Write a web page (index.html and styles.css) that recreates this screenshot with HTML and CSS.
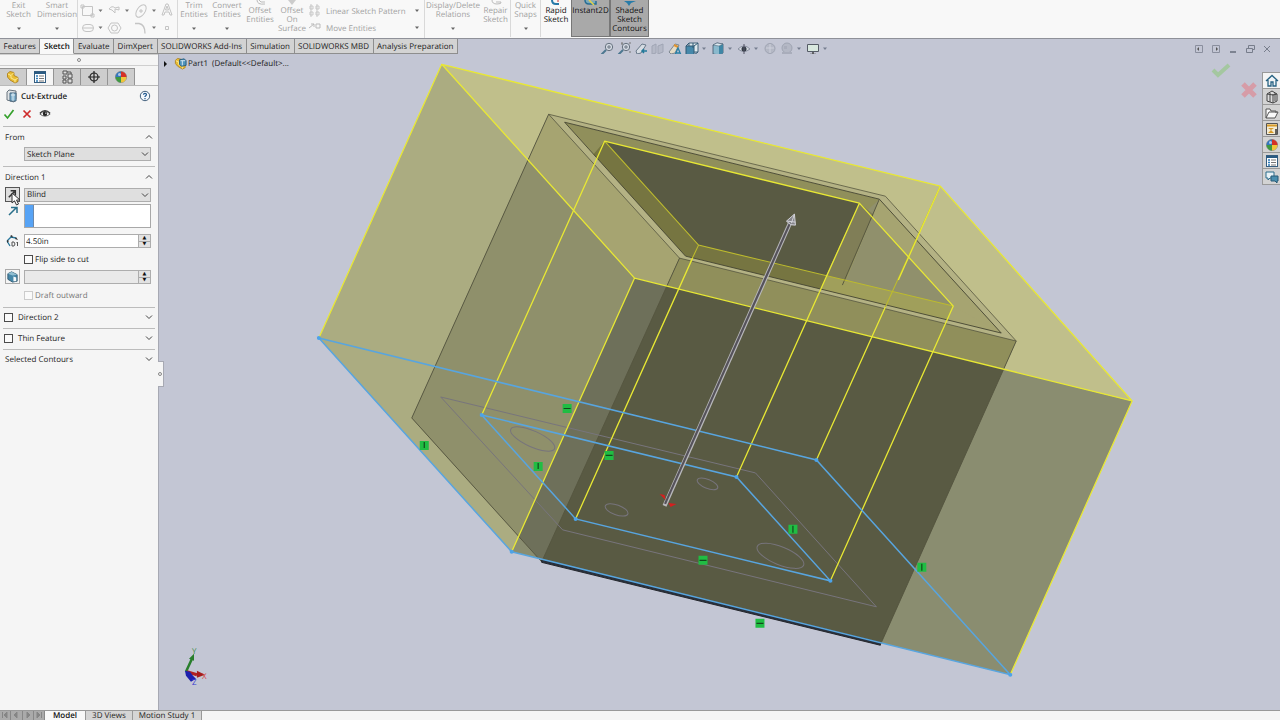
FILE: index.html
```html
<!DOCTYPE html>
<html lang="en">
<head>
<meta charset="utf-8">
<title>Part1 - Cut-Extrude</title>
<link rel="stylesheet" href="styles.css">
</head>
<body>
<svg class="defs" aria-hidden="true">
  <symbol id="caret" viewBox="0 0 6 4"><path d="M1 0.5h4L3 3z" fill="currentColor"/></symbol>
  <symbol id="up" viewBox="0 0 8 6"><path d="M1 4.5 4 1.5 7 4.5" fill="none" stroke="#444"/></symbol>
  <symbol id="down" viewBox="0 0 8 6"><path d="M1 1.5 4 4.5 7 1.5" fill="none" stroke="#444"/></symbol>
  <symbol id="part" viewBox="0 0 14 14"><path d="M1.500 3.500 4 1.500l4 1v3l4 2v4l-3 1.500-5-3-2.500-3z" fill="#e8bd35" stroke="#a97912" stroke-width=".8"/><path d="M2 4l3 1.500 3-3M5 5.500V8l4 2v2.500M9 10l3-2" fill="none" stroke="#fff2a8" stroke-width=".8"/></symbol>
  <symbol id="list" viewBox="0 0 14 14"><rect x="1.500" y="1.500" width="11" height="11" fill="#fff" stroke="#365e80"/><path d="M1 3h12" stroke="#2b5b82" stroke-width="2"/><path d="M3 6h2M3 8.500h2M3 11h2" stroke="#2b7ab8" stroke-width="1.500"/><path d="M6 6h5M6 8.500h5M6 11h5" stroke="#777"/></symbol>
  <symbol id="ball" viewBox="0 0 14 14"><circle cx="7" cy="7" r="5.500" fill="#eee" stroke="#555" stroke-width=".6"/><path d="M7 7V1.500A5.500 5.500 0 0 0 1.500 7z" fill="#3477bd"/><path d="M7 7V1.500A5.500 5.500 0 0 1 12.500 7z" fill="#d43127"/><path d="M7 7h5.500A5.500 5.500 0 0 1 7 12.500z" fill="#f0c53a"/><path d="M7 7v5.500A5.500 5.500 0 0 1 1.500 7z" fill="#3e9841"/><circle cx="5.500" cy="4.500" r="1.500" fill="#fff" opacity=".6"/></symbol>
  <symbol id="lens" viewBox="0 0 14 14"><circle cx="9" cy="5" r="3.700" fill="#d3d9e2" stroke="#66727f"/><path d="M6 8 1.500 12.500" stroke="#4d7890" stroke-width="2"/><path d="M7 5h4M9 3v4" stroke="#66727f" stroke-width=".9"/></symbol>
  <symbol id="eye" viewBox="0 0 14 14"><path d="M1 7q6-6 12 0-6 5-12 0z" fill="#fff" stroke="#444"/><path d="M1 6q6-6 12 0" fill="none" stroke="#333" stroke-width="1.300"/><circle cx="7" cy="6.800" r="2.600" fill="#222"/><circle cx="8" cy="6" r=".7" fill="#fff"/></symbol>
  <symbol id="cube" viewBox="0 0 14 14"><path d="M2 3l4-2 6 1v9l-4 2-6-1z" fill="#8ab9cd" stroke="#40566a" stroke-width=".8"/><path d="M8 4l4-2v9l-4 2z" fill="#3f86a5"/><path d="M2 3l6 1 4-2-6-1z" fill="#dce9f0" stroke="#40566a" stroke-width=".5"/></symbol>
</svg>

<div class="app">
  <header class="ribbon">
    <button class="tool w37"><span>Exit<br>Sketch</span><svg class="caret"><use href="#caret"/></svg></button>
    <button class="tool w40"><span>Smart<br>Dimension</span><svg class="caret"><use href="#caret"/></svg></button>
    <div class="sketch-tools">
      <svg viewBox="0 0 98 38" fill="none" stroke="#c4c4c4">
        <path d="M4.500 6.500h10v9h-10zM3 5h3v3H3zM13 14h3v3h-3z"/><path d="M31 9q3-4 6-1l4-1v3l-4-1v4l-3-3z"/><ellipse cx="63" cy="11" rx="7" ry="4" transform="rotate(-55 63 11)"/><path d="M62 10h2v2h-2z"/><path d="M84 15l4-11h2l4 11h-2l-1-3h-4l-1 3zM87.500 10h3L89 6z"/>
        <rect x="4.500" y="24.500" width="11" height="7" rx="3.500"/><path d="M7 28h6M6 27v2M14 27v2"/><path d="M33 23h7l3 5-3 5h-7l-3-5z"/><circle cx="36.500" cy="28" r="3"/><path d="M57 23.500h4q6 1 6 10" stroke-width="1.300"/><path d="M87.500 26.500h3v3h-3z"/>
        <g fill="#777" stroke="none"><path d="M20.500 9.500h4l-2 2.500zM47 9.500h4L49 12zM74 9.500h4L76 12zM20.500 26.500h4l-2 2.500zM74 26.500h4L76 29z"/></g>
      </svg>
    </div>
    <button class="tool w32"><span>Trim<br>Entities</span><svg class="caret"><use href="#caret"/></svg></button>
    <button class="tool w34"><span>Convert<br>Entities</span><svg class="caret"><use href="#caret"/></svg></button>
    <button class="tool low w32"><svg class="stub" viewBox="0 0 14 6"><path d="M4 0q0 5 8 4M6 0q1 3 6 2" fill="none" stroke="#bbb"/></svg><span>Offset<br>Entities</span></button>
    <button class="tool low w32"><svg class="stub" viewBox="0 0 14 6"><path d="M3 0h8L7 5z" fill="#ccc"/></svg><span>Offset<br>On<br>Surface</span></button>
    <div class="stack">
      <button><svg viewBox="0 0 14 14"><path d="M2 2h3v3H2zM8 2h3v3H8zM2 8h3v3H2zM8 8h3v3H8zM3 0v13M9 0v13" fill="none" stroke="#c8c8c8"/></svg><span>Linear Sketch Pattern</span><svg class="caret"><use href="#caret"/></svg></button>
      <button><svg viewBox="0 0 14 14"><path d="M1 7l5-4M3 3h3v3M8 3h4v4H8z" fill="none" stroke="#bbb"/></svg><span>Move Entities</span><svg class="caret"><use href="#caret"/></svg></button>
    </div>
    <button class="tool w56"><span>Display/Delete<br>Relations</span><svg class="caret"><use href="#caret"/></svg></button>
    <button class="tool low w30 edge"><svg class="stub" viewBox="0 0 14 6"><path d="M3 0q0 4 5 4t4-2H7" fill="none" stroke="#bbb"/></svg><span>Repair<br>Sketch</span></button>
    <button class="tool w30 edge"><span>Quick<br>Snaps</span><svg class="caret"><use href="#caret"/></svg></button>
    <button class="tool low w30 on"><svg class="stub" viewBox="0 0 14 6"><path d="M3 0q0 4 4 4h3" fill="none" stroke="#2779a9" stroke-width="2"/><path d="M9 0v2" stroke="#c33"/></svg><span>Rapid<br>Sketch</span></button>
    <button class="tool low w39 on pressed"><svg class="stub" viewBox="0 0 14 6"><path d="M1 0q0 4 4 4h7V1" fill="#79a9bd" stroke="#286e94" stroke-width="1.500"/><path d="M5 0l5 5" stroke="#e3d24a" stroke-width="1.500"/></svg><span>Instant2D</span></button>
    <button class="tool low w39 on pressed"><svg class="stub" viewBox="0 0 14 6"><path d="M1 1h12L8 3 6 6 4 3z" fill="#277ba8"/></svg><span>Shaded<br>Sketch<br>Contours</span></button>
  </header>

  <div class="tabbar">
    <nav class="tabs">
      <button>Features</button><button class="active">Sketch</button><button>Evaluate</button><button>DimXpert</button><button>SOLIDWORKS Add-Ins</button><button>Simulation</button><button>SOLIDWORKS MBD</button><button>Analysis Preparation</button>
    </nav>
    <div class="hud">
      <button aria-label="Zoom to fit"><svg><use href="#lens"/></svg></button>
      <button aria-label="Zoom to area"><svg viewBox="0 0 14 14"><use href="#lens"/><path d="M4 1h2M12 1h2M13 9v2M5 1v2" stroke="#777"/></svg></button>
      <button aria-label="Previous view"><svg viewBox="0 0 14 14"><path d="M2 9 8 2l4 1-5 8-4 1z" fill="#d6dce3" stroke="#69798a"/><path d="M13 9H8m2-2-2 2 2 2" fill="none" stroke="#23799a" stroke-width="1.500"/></svg></button>
      <button aria-label="Section view"><svg viewBox="0 0 14 14"><path d="M1 4l4-2v9l-4 1zM7 4l5-2v8l-5 2z" fill="#b5b9c7" stroke="#a0a5b4"/></svg></button>
      <button aria-label="Annotation view"><svg viewBox="0 0 14 14"><path d="M1 10 7 2l4 1-4 8-4 1z" fill="#e5dcc5" stroke="#7d8790"/><path d="M6 3l4 2" stroke="#e1942f" stroke-width="2"/><path d="M7 13l3-7 3 7M8 11h4" fill="none" stroke="#277fa5" stroke-width="1.300"/></svg></button>
      <button aria-label="View orientation"><svg viewBox="0 0 14 14"><path d="M4 1h9v9H4z" fill="#dfe9ed" stroke="#43657a"/><path d="M1 4h8v9H1z" fill="#4688aa" stroke="#315a75"/><path d="M1 4l3-3M9 4l4-3M9 13l4-3M8 1v5" stroke="#315a75"/></svg></button><svg class="caret"><use href="#caret"/></svg>
      <button aria-label="Display style"><svg><use href="#cube"/></svg></button><svg class="caret"><use href="#caret"/></svg>
      <button aria-label="Hide items"><svg viewBox="0 0 14 14"><path d="M1 7q6-6 12 0-6 5-12 0z" fill="#d5d9e0" stroke="#8990a0"/><circle cx="7" cy="7" r="2.500" fill="#333b45"/><path d="M7 2v10" stroke="#556"/></svg></button><svg class="caret"><use href="#caret"/></svg>
      <button aria-label="Appearance"><svg viewBox="0 0 14 14"><circle cx="7" cy="6.500" r="5" fill="#b4b8c5" stroke="#a0a5b3"/><path d="M7 2v9M3 6h8" stroke="#ced1dc"/></svg></button>
      <button aria-label="Scene"><svg viewBox="0 0 14 14"><circle cx="7" cy="6" r="5" fill="#b4b8c5" stroke="#a0a5b3"/><path d="M2 10h10v3H2M4 4h3v3H4z" fill="#a9adbb"/></svg></button><svg class="caret"><use href="#caret"/></svg>
      <button aria-label="View settings"><svg viewBox="0 0 14 14"><path d="M1.500 2.500h11v7h-11z" fill="#d9e8df" stroke="#555b66"/><path d="M7 10v2M4 12.500h6" stroke="#444" stroke-width="1.500"/></svg></button><svg class="caret"><use href="#caret"/></svg>
    </div>
    <div class="window-buttons">
      <button aria-label="Collapse left"><svg viewBox="0 0 10 10"><path d="M1.500 1.500h7v7h-7z" fill="none" stroke="#8a8f9e"/><path d="M5 3v4L3 5z" fill="#555"/></svg></button>
      <button aria-label="Collapse right"><svg viewBox="0 0 10 10"><path d="M1.500 1.500h7v7h-7z" fill="none" stroke="#8a8f9e"/><path d="M5 3v4l2-2z" fill="#555"/></svg></button>
      <button aria-label="Minimize"><svg viewBox="0 0 10 10"><path d="M2 8h6" stroke="#666c7b" stroke-width="1.500"/></svg></button>
      <button aria-label="Restore"><svg viewBox="0 0 10 10"><path d="M1.500 4.500h6v4h-6zM3.500 4V1.500h6v4H8" fill="none" stroke="#777d8b"/></svg></button>
      <button aria-label="Close"><svg viewBox="0 0 10 10"><path d="M2 2l6 6M8 2 2 8" stroke="#777d8b"/></svg></button>
    </div>
  </div>

  <main class="work">
    <aside class="panel">
      <div class="grip"><i></i></div>
      <nav class="panel-tabs">
        <button aria-label="Feature tree"><svg><use href="#part"/></svg></button>
        <button class="active" aria-label="Properties"><svg><use href="#list"/></svg></button>
        <button aria-label="Configurations"><svg viewBox="0 0 14 14"><path d="M3 1h4v3H3zM3 6h3v3H3zM3 10h3v3H3zM8 4h4v4H8zM8 9h4v4H8zM7 2h4v2" fill="#ddd" stroke="#555"/></svg></button>
        <button aria-label="Dimensions"><svg viewBox="0 0 14 14"><circle cx="7" cy="7" r="4" fill="none" stroke="#222" stroke-width="1.200"/><path d="M7 1v12M1 7h12" stroke="#222" stroke-width="1.200"/></svg></button>
        <button aria-label="Display"><svg><use href="#ball"/></svg></button>
      </nav>
      <div class="title"><svg viewBox="0 0 14 14"><path d="M2 3l2-2 7 1v8l-2 3-7-2z" fill="#dfe3e6" stroke="#68737d"/><path d="M5 4h6v8H5z" fill="#84b5d2" stroke="#42657e"/><path d="M8 4v8M6 6h4" stroke="#dceaf2"/></svg><h1>Cut-Extrude</h1><button aria-label="Help"><svg viewBox="0 0 12 12"><circle cx="6" cy="6" r="4.700" fill="#f4f8fc" stroke="#44617d"/><path d="M4.500 4.800q0-1.500 1.500-1.500t1.500 1.300q0 .8-1.500 1.800v.6M6 8v1.200" fill="none" stroke="#245b91" stroke-width="1.200"/></svg></button></div>
      <div class="actions">
        <button aria-label="OK"><svg viewBox="0 0 12 12"><path d="M1.500 6.500 4.500 10l6-8" fill="none" stroke="#35a12c" stroke-width="1.700"/></svg></button>
        <button aria-label="Cancel"><svg viewBox="0 0 12 12"><path d="M2.500 2.500l7 7M9.500 2.500l-7 7" stroke="#cf2c2c" stroke-width="1.700"/></svg></button>
        <button aria-label="Preview"><svg><use href="#eye"/></svg></button>
      </div>

      <section>
        <button class="head"><span>From</span><svg><use href="#up"/></svg></button>
        <div class="field"><span class="lead"></span><span class="combo"><select aria-label="From"><option>Sketch Plane</option></select><svg><use href="#down"/></svg></span></div>
      </section>
      <section>
        <button class="head"><span>Direction 1</span><svg><use href="#up"/></svg></button>
        <div class="field"><button class="lead framed dark" aria-label="Reverse direction"><svg viewBox="0 0 14 14"><path d="M3 10 9 4M5 3h5v5" fill="none" stroke="#333" stroke-width="1.700"/></svg></button><span class="combo"><select aria-label="End condition"><option>Blind</option></select><svg><use href="#down"/></svg></span>
          <svg class="cursor" viewBox="0 0 10 15"><path d="M1 1v10l2.500-2.200 2 4.200 2-1-2-4H9z" fill="#fff" stroke="#333"/></svg></div>
        <div class="field top"><span class="lead"><svg viewBox="0 0 14 14"><path d="M3 11 10 4M5 3.500h6V9" fill="none" stroke="#296f8a" stroke-width="1.500"/></svg></span><span class="selection"><i></i><input aria-label="Direction of extrusion"></span></div>
        <div class="field"><span class="lead"><svg viewBox="0 0 14 14"><path d="M1 7l4-4 5 1M1 7l3 5" fill="none" stroke="#28779b" stroke-width="1.300"/><path d="M4 2l2-1 1 3zM1 6l2 1-2 2M10 3l2 3-3-1" fill="#333"/><path d="M6 8h2q2 2 0 4H6zM11.500 8v4M10.500 9l1-1" fill="none" stroke="#555"/></svg></span><span class="spin"><input aria-label="Depth" value="4.50in"><span><button aria-label="Increase depth">▲</button><button aria-label="Decrease depth">▼</button></span></span></div>
        <label class="check"><input type="checkbox">Flip side to cut</label>
        <div class="field"><button class="lead framed" aria-label="Draft"><svg viewBox="0 0 14 14"><path d="M2 4l4-2 6 3v7l-5 1-5-3z" fill="#4687a8" stroke="#335a70"/><path d="M2 4l5 2 5-1-6-3z" fill="#91bed1"/><path d="M8 7l3 1v4H8z" fill="#f7fafb"/></svg></button><span class="spin off"><input aria-label="Draft angle" disabled><span><button aria-label="Increase angle">▲</button><button aria-label="Decrease angle">▼</button></span></span></div>
        <label class="check dim"><input type="checkbox" disabled>Draft outward</label>
      </section>
      <section class="closed"><div class="head"><label><input type="checkbox">Direction 2</label><button aria-label="Expand Direction 2"><svg><use href="#down"/></svg></button></div></section>
      <section class="closed"><div class="head"><label><input type="checkbox">Thin Feature</label><button aria-label="Expand Thin Feature"><svg><use href="#down"/></svg></button></div></section>
      <section class="closed"><button class="head"><span>Selected Contours</span><svg><use href="#down"/></svg></button></section>
      <div class="handle"><i></i></div>
    </aside>

    <div class="viewport">
      <svg class="scene" viewBox="158 54 1122 656" role="img" aria-label="Extruded cut preview of Part1">
        <defs>
          <clipPath id="cTop"><path d="M441 64 940 186 1132 401 634 278z"/></clipPath>
          <clipPath id="cLeft"><path d="M441 64 634 278 511 552 318 338z"/></clipPath>
          <clipPath id="cOpen"><path d="M564 122 879 199 1001 333 685 256z"/></clipPath>
        </defs>
        <path fill="#8a8d70" d="M634 278 1132 401 1010 675 511 552z"/>
        <path fill="#abac81" d="M441 64 634 278 511 552 318 338z"/>
        <path fill="#c0bf8b" d="M441 64 940 186 1132 401 634 278z"/>
        <path fill="#6e705a" d="M548 114 679 258 541 562 411 418z"/>
        <path fill="#8f906b" clip-path="url(#cLeft)" d="M548 114 679 258 541 562 411 418z"/>
        <path fill="#a6a471" clip-path="url(#cTop)" d="M548 114 679 258 541 562 411 418z"/>
        <path fill="#595a43" d="M679 258 1016 341 880 645 541 562z"/>
        <path fill="#908f5b" clip-path="url(#cTop)" d="M679 258 1016 341 880 645 541 562z"/>
        <path fill="#b4b284" stroke="#57573f" stroke-width=".8" d="M548 114 885 196 1016 341 679 258z"/>
        <g clip-path="url(#cOpen)">
          <path fill="#908f5b" d="M564 122 879 199 1001 333 685 256z"/>
          <path fill="#a6a471" d="M879 199 1001 333 840 294z"/>
          <path fill="#90906c" d="M879 199 866 211 953 306 840 294z"/>
          <path fill="#a6a471" d="M879 199 1001 333 953 306 872 217z"/>
          <path fill="#807e57" d="M859 203 873 214 838 294 820 289z"/>
          <path fill="#595a43" d="M604 141 859 203 825 277 698 245z"/>
          <path fill="#767541" d="M604 141 698 245 827 276 819 292 685 256 592 155z"/>
          <path fill="#a09f5b" d="M827 276 953 306 945 325 819 292z"/>
        </g>
        <path fill="none" stroke="#454532" stroke-width=".9" d="M564 122 879 199 1001 333 685 256z"/>
        <path fill="none" stroke="#53533e" stroke-width=".9" d="M548 114 411 418 541 562 679 258M1016 341 880 645M879 199 842 285"/>
        <path fill="#29313e" stroke="#24262b" d="M541 560 880 643v2.500L541 562.500z"/>
        <g fill="none" stroke="#77747c" stroke-width="1">
          <path d="M440 397 755 473 876 607 562 530z"/>
          <ellipse cx="532" cy="439" rx="24" ry="8" transform="rotate(24 532 439)"/>
          <ellipse cx="616" cy="510" rx="12" ry="5" transform="rotate(20 616 510)"/>
          <ellipse cx="707" cy="484" rx="11" ry="4.500" transform="rotate(22 707 484)"/>
          <ellipse cx="780" cy="556" rx="25" ry="9" transform="rotate(22 780 556)"/>
        </g>
        <path fill="none" stroke="#bdbb2d" stroke-width="1.100" d="M604 141 698 245 953 306M940 186 885 307M698 245 690 262"/>
        <g fill="none" stroke="#e8e834" stroke-width="1.300" stroke-linejoin="round">
          <path d="M318 338 441 64 940 186 1132 401 1010 675M441 64 634 278 1132 401M634 278 511 552"/>
          <path d="M481 415 604 141 859 203 953 306 830 581M859 203 736 477M692 258 575 519M940 186 898 280M885 307 816 460"/>
        </g>
        <g fill="none" stroke="#58a5df" stroke-width="1.500">
          <path d="M318 338 816 460 1010 675 511 552zM481 415 736 477 830 581 575 519z"/>
        </g>
        <g fill="#4da3e8"><circle cx="318" cy="338" r="2"/><circle cx="816" cy="460" r="2"/><circle cx="1010" cy="675" r="2"/><circle cx="511" cy="552" r="2"/><circle cx="481" cy="415" r="2"/><circle cx="736" cy="477" r="2"/><circle cx="830" cy="581" r="2"/><circle cx="575" cy="519" r="2"/></g>
        <path d="M664 506 790 222" stroke="#b9b9bc" stroke-width="4.200"/><path d="M664.500 504 790 222" stroke="#55525a" stroke-width="2.200"/>
        <path d="M794 214 786 221q4 5 9 4z" fill="#85858a" stroke="#d4d4da"/><path d="M794 214l-3 9M787 221l8 1" stroke="#d4d4da" fill="none"/>
        <path d="M659 494l5 1 1 5zM668 503l8 1-6 3z" fill="#d51f1f"/>
        <g fill="#20bd43"><path d="M562 404h9v9h-9zM419 441h9v9h-9zM533 462h9v9h-9zM604 451h9v9h-9zM788 525h9v9h-9zM698 556h9v9h-9zM917 563h9v9h-9zM755 619h9v9h-9z"/></g>
        <path d="M563 408.500h7M423.500 442v6M537.500 463v6M605 455.500h7M792.500 526v7M699 560.500h7M921.500 564v7M756 623.500h7" stroke="#124a1c" stroke-width="1.200"/>
        <path d="M185 672 191 659" stroke="#287e2c" stroke-width="2.500"/><path d="M193 654l-5 5 5 2z" fill="#287e2c"/>
        <path d="M186 672l10 3" stroke="#b12020" stroke-width="3"/><path d="M196 671l8 4-8 3z" fill="#a51d1d"/>
        <path d="M184 671l5 1 3 4 3 3-5 3-5-6z" fill="#1d20ad"/>
        <g class="axis"><text x="191" y="654" fill="#398b40">Y</text><text x="201" y="679" fill="#d54747">X</text><text x="191" y="685" fill="#3636d0">Z</text></g>
      </svg>
      <div class="tree"><svg class="twist" viewBox="0 0 4 6"><path d="M0 0v6l3-3z" fill="#111"/></svg><svg viewBox="0 0 14 14"><use href="#part"/><path d="M6 3l5-1 2 2v5l-5 1-2-2z" fill="#4f95bd" stroke="#275b7a"/><path d="M7 4l5 0M9 4v5" stroke="#d9eaf3"/></svg><span>Part1&nbsp; (Default&lt;&lt;Default&gt;...</span></div>
      <button class="confirm ok" aria-label="Accept sketch"><svg viewBox="0 0 20 16"><path d="M2 8 7 13 18 3" fill="none" stroke="#a4c7a0" stroke-width="4"/></svg></button>
      <button class="confirm no" aria-label="Discard sketch"><svg viewBox="0 0 18 18"><path d="M3 3l12 12M15 3 3 15" stroke="#d69ca7" stroke-width="5"/></svg></button>
      <nav class="taskpane">
        <button class="active" aria-label="Resources"><svg viewBox="0 0 14 14"><path d="M1 7l6-5.500L13 7M3 6v6h3V8h2v4h3V6" fill="#eef4f8" stroke="#276282" stroke-width="1.300"/></svg></button>
        <button aria-label="Design library"><svg viewBox="0 0 14 14"><path d="M2 4l5-3 5 3v7l-4 2-6-2zM5 3v9M8 4v9M10 3v8M2 4l6 1 4-1" fill="#ddd" stroke="#444"/></svg></button>
        <button aria-label="File explorer"><svg viewBox="0 0 14 14"><path d="M1 12V3h4l1 2h5v2M1 12l3-6h9l-3 6z" fill="#fafafa" stroke="#555"/></svg></button>
        <button aria-label="View palette"><svg viewBox="0 0 14 14"><path d="M1.500 1.500h11v11h-11z" fill="#f4ecd4" stroke="#555"/><path d="M2 3.500h10" stroke="#d79b28" stroke-width="2"/><path d="M3 6l3 2-3 3h6L6 8l3-2z" fill="#d79b28"/><path d="M11 7v5" stroke="#333" stroke-width="1.500"/></svg></button>
        <button aria-label="Appearances"><svg><use href="#ball"/></svg></button>
        <button aria-label="Custom properties"><svg><use href="#list"/></svg></button>
        <button aria-label="Forum"><svg viewBox="0 0 14 14"><path d="M1 2h8v6H5L3 10V8H1z" fill="#e8f2f6" stroke="#2b6c8c"/><path d="M6 6h7v5h-1v2l-2-2H6z" fill="#4b8eae" stroke="#285a76"/></svg></button>
      </nav>
    </div>
  </main>

  <footer class="bottom">
    <div class="pager"><button aria-label="First"><svg viewBox="0 0 8 8"><path d="M1.500 1v6M6 1v6L3 4z"/></svg></button><button aria-label="Previous"><svg viewBox="0 0 8 8"><path d="M5 1v6L2 4z"/></svg></button><button aria-label="Next"><svg viewBox="0 0 8 8"><path d="M3 1v6l3-3z"/></svg></button><button aria-label="Last"><svg viewBox="0 0 8 8"><path d="M6.500 1v6M2 1v6l3-3z"/></svg></button></div>
    <button class="active">Model</button><button>3D Views</button><button>Motion Study 1</button>
  </footer>
</div>
</body>
</html>
```
FILE: styles.css
```css
* { box-sizing: border-box; }
body { margin: 0; font: 8px/9px "Open Sans", "Noto Sans", sans-serif; text-rendering: geometricPrecision; color: #1c1c1c; background: #f5f5f5; }
button, input, select { font: inherit; color: inherit; margin: 0; padding: 0; border: 0; background: none; border-radius: 0; text-rendering: inherit; }
svg { display: block; flex: none; }
h1 { margin: 0; font-size: 8px; font-weight: 600; }
.defs { position: absolute; width: 0; height: 0; }
.app { display: flex; flex-direction: column; height: 100vh; overflow: hidden; }
.caret { width: 6px; height: 4px; color: #666; }

.ribbon { display: flex; flex: none; height: 39px; background: #f8f8f8; border-bottom: 1px solid #8f9199; color: #a2a2a2; overflow: hidden; }
.tool { display: flex; flex-direction: column; align-items: center; justify-content: space-between; flex: none; height: 37px; padding: 1px 0 6px; white-space: nowrap; text-align: center; }
.tool.low { justify-content: flex-start; padding: 0; }
.stub { width: 14px; height: 6px; }
.w30 { width: 30px; }
.w32 { width: 32px; }
.w34 { width: 34px; }
.w37 { width: 37px; }
.w39 { width: 39px; }
.w40 { width: 40px; }
.w56 { width: 56px; }
.edge { border-right: 1px solid #d9d9d9; }
.on { color: #111; }
.pressed { background: #a9a9a9; border: 1px solid #777; border-top: 0; }
.sketch-tools { flex: none; width: 101px; border: solid #d9d9d9; border-width: 0 1px; }
.sketch-tools svg { width: 98px; height: 38px; }
.stack { display: flex; flex-direction: column; gap: 3px; flex: none; width: 117px; padding: 4px 4px 0 0; border-right: 1px solid #d9d9d9; }
.stack button { display: flex; align-items: center; gap: 4px; height: 14px; white-space: nowrap; }
.stack button svg:first-child { width: 14px; height: 14px; }
.stack button .caret { margin-left: auto; }

.tabbar { display: flex; flex: none; height: 15px; background: #c3c6d4; }
.tabs { display: flex; width: 458px; height: 15px; }
.tabs button { flex: 1 1 auto; border: solid #8e8e8e; border-width: 0 1px 1px 0; background: #d3d3d3; white-space: nowrap; }
.tabs .active, .bottom .active { background: #f8f8f8; color: #111; font-weight: 600; }
.tabs .active { border-bottom-color: #f8f8f8; }
.hud { display: flex; align-items: center; height: 20px; margin-left: 142px; gap: 3px; }
.hud button, .hud button svg { width: 14px; height: 14px; }
.hud .caret { color: #777e90; margin: 0 1px 0 -1px; }
.window-buttons { display: flex; align-items: center; gap: 7px; height: 20px; margin-left: auto; padding-right: 8px; }
.window-buttons svg { width: 10px; height: 10px; }

.work { display: flex; flex: 1; min-height: 0; }
.panel { position: relative; flex: none; width: 159px; background: #f5f5f5; border-right: 1px solid #a7a9b3; }
.grip { display: flex; align-items: center; justify-content: center; height: 12px; border: solid #cfcfcf; border-width: 1px 0; }
.grip i, .handle i { width: 4px; height: 4px; border: 1px solid #888; border-radius: 50%; }
.panel-tabs { display: flex; height: 20px; padding-top: 2px; margin-bottom: 2px; border-bottom: 1px solid #b9b9b9; }
.panel-tabs button { display: flex; align-items: center; justify-content: center; width: 27px; border: solid #949494; border-width: 1px 1px 0 0; background: #cdcdcd; }
.panel-tabs .active { background: #f5f5f5; }
.panel-tabs svg { width: 14px; height: 14px; }
.title { display: flex; align-items: center; height: 16px; padding: 0 7px 0 5px; gap: 2px; }
.title > svg { width: 14px; height: 14px; }
.title button { margin-left: auto; }
.title button svg { width: 12px; height: 12px; }
.actions { display: flex; align-items: center; gap: 6px; height: 22px; padding: 0 3px 2px; }
.actions svg { width: 12px; height: 12px; }

section { margin: 0 3px; padding: 4px 2px 5px; border-top: 1px solid #bcbcbc; }
.head { display: flex; align-items: center; justify-content: space-between; width: 100%; height: 12px; text-align: left; font-weight: 500; }
.head svg { width: 8px; height: 6px; }
.field { display: flex; align-items: center; gap: 4px; margin-top: 4px; position: relative; }
.field.top { align-items: flex-start; margin: 2px 0; }
.field.top + .field { margin-top: 6px; }
.lead { display: flex; align-items: center; justify-content: center; flex: none; width: 15px; height: 14px; }
.lead svg { width: 14px; height: 14px; }
.framed { height: 15px; border: 1px solid #aaa; }
.framed svg { width: 13px; height: 13px; }
.dark { border-color: #555; background: #dedede; }
.combo { position: relative; flex: 1; height: 14px; margin-right: 2px; }
.combo select { display: block; appearance: none; width: 100%; height: 14px; padding: 0 2px; background: #dfdfdf; border: 1px solid #adadad; }
.combo svg { position: absolute; right: 2px; top: 4px; width: 8px; height: 6px; pointer-events: none; }
.cursor { position: absolute; left: 6px; top: 5px; width: 10px; height: 15px; z-index: 1; }
.selection { display: flex; flex: 1; min-width: 0; height: 24px; margin-right: 2px; background: #fff; border: 1px solid #a8a8a8; }
.selection i { flex: none; width: 9px; background: #57a3f5; border-right: 1px solid #6b89ad; }
.selection input { flex: 1; width: 0; min-width: 0; }
.spin { display: flex; flex: 1; min-width: 0; height: 14px; margin-right: 2px; background: #fff; border: 1px solid #adadad; }
.spin input { flex: 1; width: 0; min-width: 0; padding: 0 1px; }
.spin > span { display: flex; flex: none; flex-direction: column; width: 12px; border-left: 1px solid #adadad; }
.spin button { height: 6px; font: 5px/6px "DejaVu Sans", sans-serif; background: #e2e2e2; color: #111; overflow: hidden; }
.spin button + button { border-top: 1px solid #aaa; line-height: 5px; }
.spin.off { background: #e9e9e9; }
.check, .head label { display: flex; align-items: center; }
.check { gap: 2px; margin: 6px 0 1px 19px; height: 11px; }
.head label { gap: 5px; margin-left: -1px; }
input[type="checkbox"] { appearance: none; width: 9px; height: 9px; border: 1px solid #4b4b4b; background: #fafafa; }
.dim { color: #777; }
.dim input[type="checkbox"] { border-color: #ccc; }
.closed { padding: 3px 2px 5px; }
.handle { position: absolute; left: 158px; top: 307px; display: flex; align-items: center; width: 6px; height: 26px; background: #f5f5f5; border: 1px solid #a7a9b3; border-left: 0; z-index: 2; }

.viewport { position: relative; flex: 1; min-width: 0; background: #c3c6d4; }
.scene { width: 100%; height: 100%; }
.axis { font-size: 8px; }
.tree { position: absolute; left: 5px; top: 3px; display: flex; align-items: center; white-space: pre; }
.tree svg { width: 13px; height: 13px; margin-right: 1px; }
.tree .twist { width: 4px; height: 6px; margin-right: 6px; }
.confirm { position: absolute; }
.ok { right: 49px; top: 8px; }
.ok svg { width: 20px; height: 16px; }
.no { right: 22px; top: 27px; }
.no svg { width: 18px; height: 18px; }
.taskpane { position: absolute; right: 0; top: 18px; width: 18px; border: solid #999; border-width: 1px 0 0 1px; }
.taskpane button { display: flex; align-items: center; justify-content: center; width: 17px; height: 16px; background: #d3d3d3; border-bottom: 1px solid #999; }
.taskpane .active { background: #f4f4f4; }
.taskpane svg { width: 14px; height: 14px; }

.bottom { display: flex; flex: none; height: 10px; border-top: 1px solid #999; background: #f5f5f5; }
.bottom button { padding: 0 6px; border-right: 1px solid #999; background: #d5d5d5; white-space: nowrap; }
.bottom .active { padding: 0 8px; }
.pager { display: flex; width: 45px; background: #aaa; }
.bottom .pager button { display: flex; justify-content: center; flex: 1; padding: 0; background: #aaa; border-color: #888; }
.pager svg { width: 8px; height: 8px; fill: #858585; stroke: #858585; stroke-width: 1px; }
```
